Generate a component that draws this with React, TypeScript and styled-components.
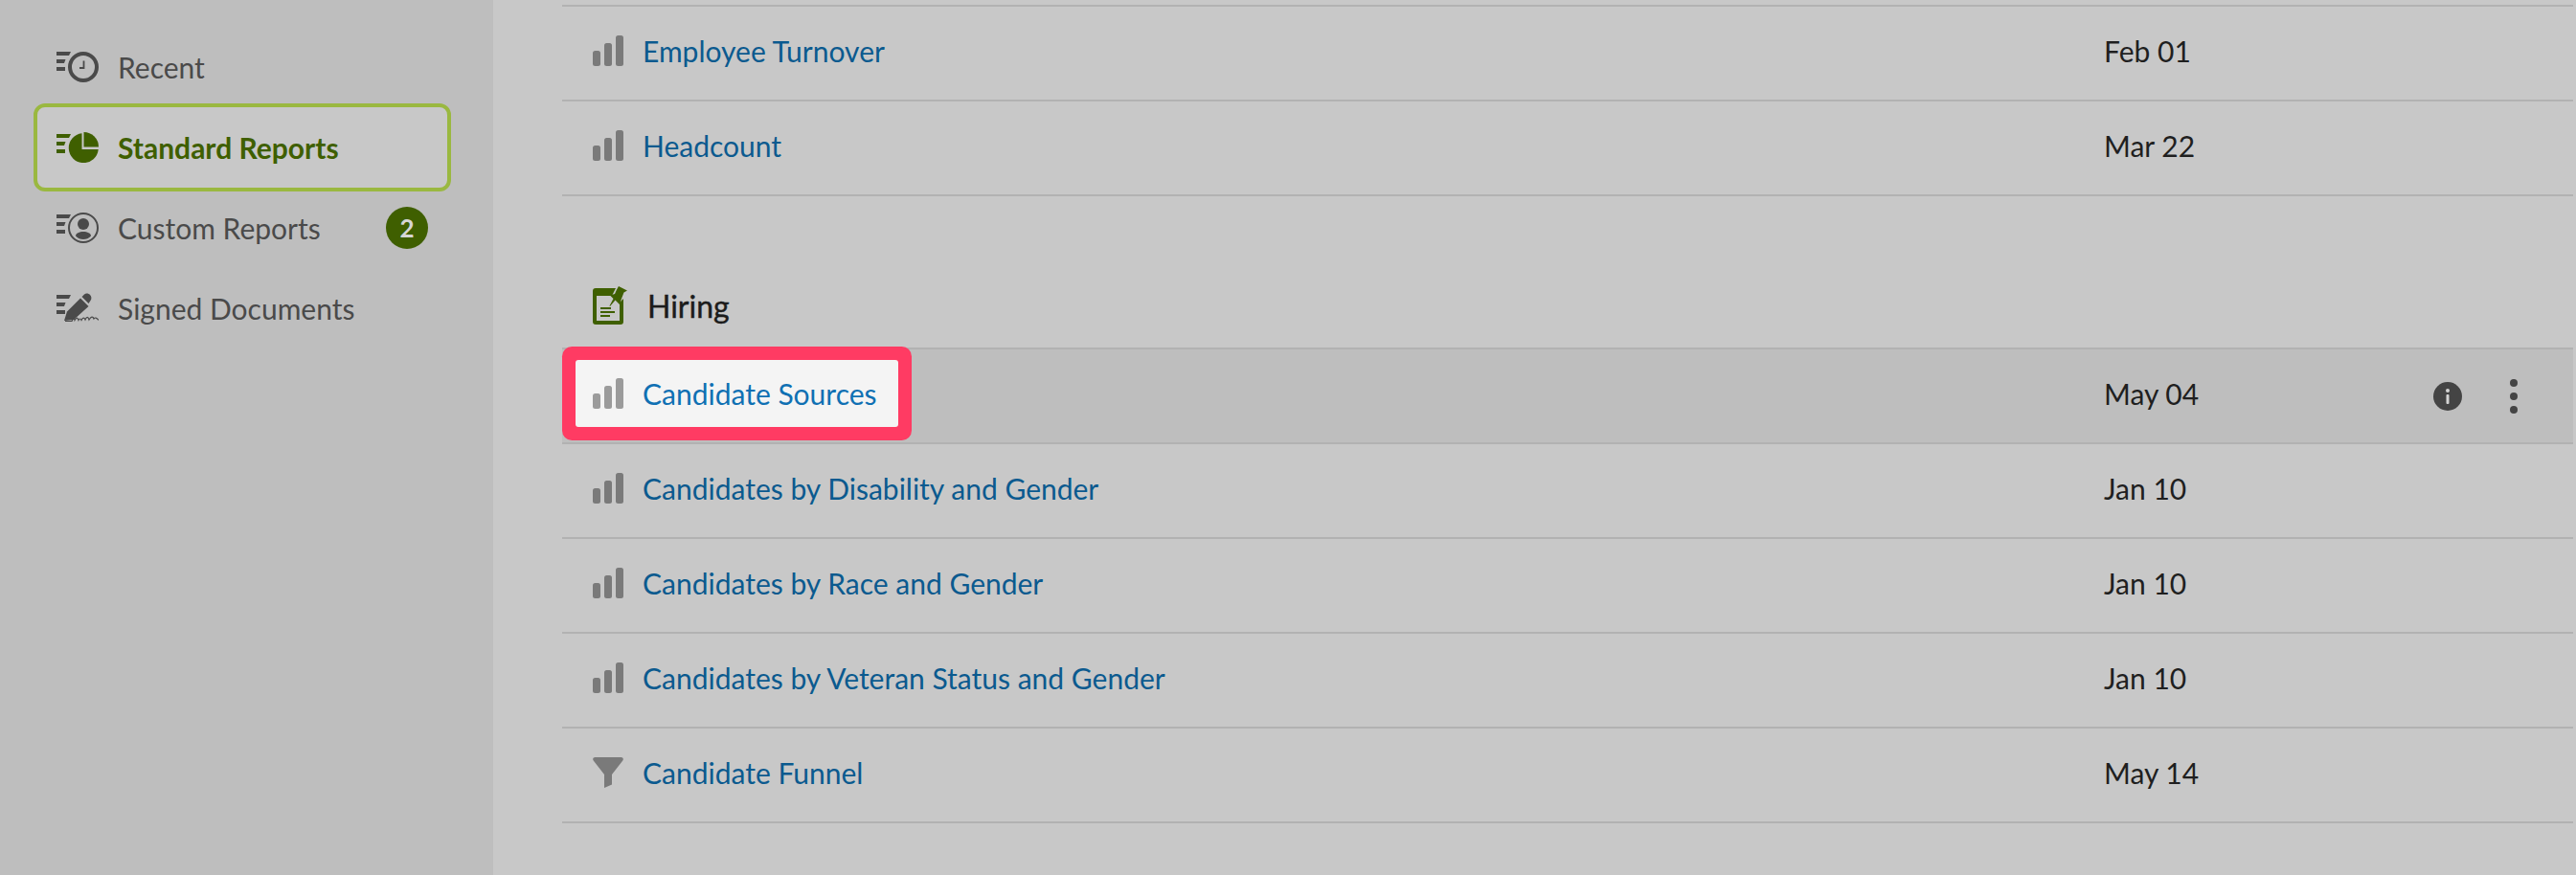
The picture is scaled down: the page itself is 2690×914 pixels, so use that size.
import styled, { createGlobalStyle } from "styled-components";

const GlobalStyle = createGlobalStyle`
  html, body {
    margin: 0;
    padding: 0;
    background: #c8c8c8;
  }
  body {
    font-family: Lato, "Liberation Sans", sans-serif;
  }
`;

const Page = styled.div`
  display: flex;
  width: 2690px;
  height: 914px;
  overflow: hidden;
  background: #c8c8c8;
`;

const Sidebar = styled.nav`
  width: 515px;
  flex-shrink: 0;
  box-sizing: border-box;
  padding: 28px 44px 0 35px;
  background: #bebebe;
`;

const NavItem = styled.div<{ $active?: boolean }>`
  display: flex;
  align-items: center;
  box-sizing: border-box;
  height: ${(p) => (p.$active ? "92px" : "84px")};
  margin: ${(p) => (p.$active ? "-4px 0" : "0")};
  padding-left: ${(p) => (p.$active ? "20px" : "24px")};
  padding-right: 20px;
  gap: 20px;
  font-size: 30px;
  font-weight: ${(p) => (p.$active ? 700 : 400)};
  color: ${(p) => (p.$active ? "#3f5f00" : "#4a4a4a")};
  background: ${(p) => (p.$active ? "#c8c8c8" : "transparent")};
  border: ${(p) => (p.$active ? "4px solid #9ab840" : "none")};
  border-radius: 12px;
  svg {
    flex-shrink: 0;
  }
`;

const NavLabel = styled.span`
  flex: 1;
  margin-top: -1px;
`;

const Badge = styled.span`
  display: flex;
  align-items: center;
  justify-content: center;
  width: 44px;
  height: 44px;
  margin-right: 4px;
  border-radius: 50%;
  background: #3f5f00;
  color: #d6d6d6;
  font-size: 26px;
  font-weight: 700;
`;

const Main = styled.main`
  flex: 1;
  box-sizing: border-box;
  padding: 5px 3px 0 72px;
`;

const Group = styled.section`
  border-top: 2px solid #b2b2b2;
`;

const SectionTitle = styled.h2`
  display: flex;
  align-items: center;
  gap: 21px;
  height: 60px;
  margin: 84px 0 14px;
  padding-left: 32px;
  font-size: 32px;
  font-weight: 400;
  -webkit-text-stroke: 0.4px #1c1c1c;
  color: #1c1c1c;
`;

const Row = styled.div<{ $hover?: boolean }>`
  display: grid;
  grid-template-columns: 1610px 1fr auto;
  align-items: center;
  height: 92px;
  padding-bottom: 5px;
  border-bottom: 2px solid #b2b2b2;
  background: ${(p) => (p.$hover ? "#bebebe" : "transparent")};
`;

const NameCell = styled.div<{ $spotlight?: boolean }>`
  display: flex;
  align-items: center;
  gap: 20px;
  box-sizing: border-box;
  height: 70px;
  width: ${(p) => (p.$spotlight ? "337px" : "auto")};
  margin-left: ${(p) => (p.$spotlight ? "14px" : "0")};
  padding-left: ${(p) => (p.$spotlight ? "18px" : "32px")};
  background: ${(p) => (p.$spotlight ? "#f4f4f4" : "transparent")};
  border-radius: ${(p) => (p.$spotlight ? "3px" : "0")};
  box-shadow: ${(p) => (p.$spotlight ? "0 0 0 14px #ff3b63" : "none")};
  color: ${(p) => (p.$spotlight ? "#0f70b3" : "#0b5a8f")};
  svg {
    flex-shrink: 0;
    color: ${(p) => (p.$spotlight ? "#9b9b9b" : "#7a7a7a")};
  }
`;

const ReportLink = styled.a`
  font-size: 30px;
  color: inherit;
  text-decoration: none;
`;

const DateCell = styled.div`
  font-size: 30px;
  color: #1f1f1f;
`;

const Actions = styled.div`
  display: flex;
  align-items: center;
  gap: 50px;
  margin-top: 5px;
  padding-right: 58px;
  color: #444;
`;

const SpeedLines = ({ y = 0 }: { y?: number }) => (
  <g fill="currentColor">
    <path d={`M0 ${y}H15L13 ${y + 4}H0Z`} />
    <path d={`M0 ${y + 8}H9.500L8 ${y + 12}H0Z`} />
    <path d={`M0 ${y + 16}H9V${y + 20}H0Z`} />
  </g>
);

const RecentIcon = () => (
  <svg width="44" height="32" viewBox="0 0 44 32">
    <SpeedLines />
    <circle cx="28" cy="16" r="14" fill="none" stroke="currentColor" strokeWidth="4" />
    <path d="M28.500 9.500V17H24" fill="none" stroke="currentColor" strokeWidth="1.800" />
  </svg>
);

const PieIcon = () => (
  <svg width="44" height="32" viewBox="0 0 44 32">
    <SpeedLines y={2} />
    <path d="M28.500 0A15.500 15.500 0 0 1 44 15.500H28.500Z" fill="currentColor" />
    <path d="M26.500 1.200A15.500 15.500 0 1 0 43.700 18H26.500Z" fill="currentColor" />
  </svg>
);

const PersonIcon = () => (
  <svg width="44" height="32" viewBox="0 0 44 32">
    <SpeedLines y={2} />
    <circle cx="28" cy="16" r="15" fill="none" stroke="currentColor" strokeWidth="2" />
    <circle cx="28" cy="12" r="6" fill="currentColor" />
    <path d="M20 24.500C20 21.500 24 20 28 20S36 21.500 36 24.500C34 27 31 28 28 28S22 27 20 24.500Z" fill="currentColor" />
  </svg>
);

const SignIcon = () => (
  <svg width="44" height="32" viewBox="0 0 44 32">
    <SpeedLines y={2} />
    <path d="M8 29L11 19.500L25 5.500L33.500 14L18 28Z" fill="currentColor" />
    <path d="M26.500 4L29 1.500C31 0 33.500 .5 35 2C36.500 3.500 37 6 35.500 8L33.500 11Z" fill="currentColor" />
    <path d="M9 29.500H16C17.500 25.500 18.500 25.500 19 28.500C21 25 22 25.500 23 28.500C24 26.500 25 26.500 26 28.500C27.500 25.500 29 25.500 30 28C31.500 24.500 33 24.500 34 28C36 24.500 38 24 39 27C40 25.500 42 25.500 44 28.500" fill="none" stroke="currentColor" strokeWidth="1.200" />
  </svg>
);

const BarsIcon = () => (
  <svg width="32" height="32" viewBox="0 0 32 32" fill="currentColor">
    <rect x="0" y="16" width="8" height="16" rx="2.500" />
    <rect x="12" y="8" width="8" height="24" rx="2.500" />
    <rect x="24" y="0" width="8" height="32" rx="2.500" />
  </svg>
);

const FunnelIcon = () => (
  <svg width="32" height="32" viewBox="0 0 32 32" fill="currentColor">
    <path d="M2.500 0H29.500C31.500 0 32.500 1.800 31.300 3.400L20 18V28.500L12 32V18L.7 3.400C-.5 1.800 .5 0 2.500 0Z" />
  </svg>
);

const HiringIcon = () => (
  <svg width="36" height="40" viewBox="0 0 36 40">
    <path d="M3 2H24L20 10H4V36H28V17L32 13V37C32 39 31 40 29 40H3C1 40 0 39 0 37V5C0 3 1 2 3 2Z" fill="#3f5f00" />
    <path d="M27 0L36 4.500L32.500 6.500L30 13L28 19L23.500 14.500L18 21L17.500 20.500L21.500 13L18 9.500L23 8L25 3.500Z" fill="#3f5f00" />
    <path d="M8 22H19V24H8ZM8 26H23V28H8ZM8 30H18V32H8Z" fill="#3f5f00" />
  </svg>
);

const InfoIcon = () => (
  <svg width="30" height="30" viewBox="0 0 30 30">
    <circle cx="15" cy="15" r="15" fill="currentColor" />
    <circle cx="15" cy="9" r="2" fill="#d4d4d4" />
    <rect x="13.500" y="13" width="3" height="10" rx="1" fill="#d4d4d4" />
  </svg>
);

const KebabIcon = () => (
  <svg width="8" height="36" viewBox="0 0 8 36" fill="currentColor">
    <circle cx="4" cy="4" r="4" />
    <circle cx="4" cy="18" r="4" />
    <circle cx="4" cy="32" r="4" />
  </svg>
);

type Report = {
  name: string;
  date: string;
  funnel?: boolean;
  highlighted?: boolean;
};

const overview: Report[] = [
  { name: "Employee Turnover", date: "Feb 01" },
  { name: "Headcount", date: "Mar 22" },
];

const hiring: Report[] = [
  { name: "Candidate Sources", date: "May 04", highlighted: true },
  { name: "Candidates by Disability and Gender", date: "Jan 10" },
  { name: "Candidates by Race and Gender", date: "Jan 10" },
  { name: "Candidates by Veteran Status and Gender", date: "Jan 10" },
  { name: "Candidate Funnel", date: "May 14", funnel: true },
];

const ReportRow = ({ report }: { report: Report }) => (
  <Row $hover={report.highlighted}>
    <NameCell $spotlight={report.highlighted}>
      {report.funnel ? <FunnelIcon /> : <BarsIcon />}
      <ReportLink>{report.name}</ReportLink>
    </NameCell>
    <DateCell>{report.date}</DateCell>
    {report.highlighted && (
      <Actions>
        <InfoIcon />
        <KebabIcon />
      </Actions>
    )}
  </Row>
);

const App = () => {
  return (
    <>
      <GlobalStyle />
      <Page>
        <Sidebar>
          <NavItem>
            <RecentIcon />
            <NavLabel>Recent</NavLabel>
          </NavItem>
          <NavItem $active>
            <PieIcon />
            <NavLabel>Standard Reports</NavLabel>
          </NavItem>
          <NavItem>
            <PersonIcon />
            <NavLabel>Custom Reports</NavLabel>
            <Badge>2</Badge>
          </NavItem>
          <NavItem>
            <SignIcon />
            <NavLabel>Signed Documents</NavLabel>
          </NavItem>
        </Sidebar>
        <Main>
          <Group>
            {overview.map((report) => (
              <ReportRow key={report.name} report={report} />
            ))}
          </Group>
          <SectionTitle>
            <HiringIcon />
            Hiring
          </SectionTitle>
          <Group>
            {hiring.map((report) => (
              <ReportRow key={report.name} report={report} />
            ))}
          </Group>
        </Main>
      </Page>
    </>
  );
};

export default App;
